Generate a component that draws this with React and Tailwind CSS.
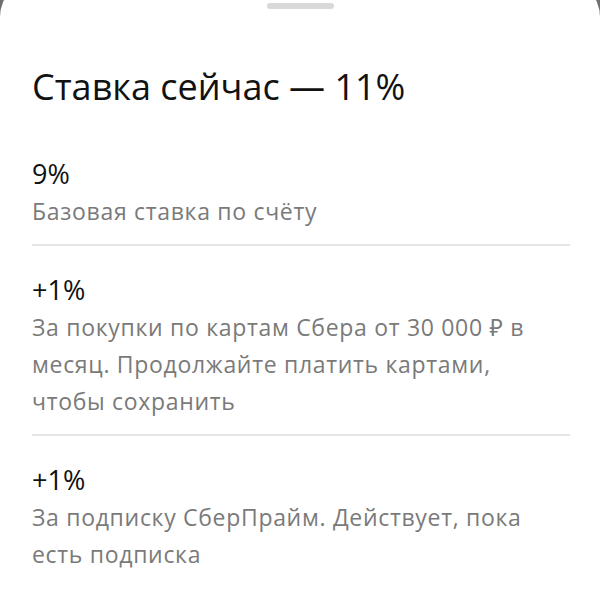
import React from 'react';

const items = [
  { value: '9%', text: 'Базовая ставка по счёту' },
  {
    value: '+1%',
    text: 'За покупки по картам Сбера от 30 000 ₽ в месяц. Продолжайте платить картами, чтобы сохранить',
  },
  { value: '+1%', text: 'За подписку СберПрайм. Действует, пока есть подписка' },
];

const RateItem = ({ value, text, last }) => (
  <div className={`pt-[25px] pb-[14px] ${last ? '' : 'border-b-2 border-[#e6e6e6]'}`}>
    <div className="text-[27px] leading-[38px] text-[#111]">{value}</div>
    <div className="max-w-[510px] text-[23px] leading-[37px] tracking-[0.03em] text-[#7a7a7a]">{text}</div>
  </div>
);

export default function App() {
  return (
    <div className="h-[600px] w-[600px] overflow-hidden bg-[#6f6f6f]" style={{ fontFamily: '"Open Sans", "Noto Sans", sans-serif' }}>
      <div className="mt-[-21px] h-[640px] rounded-t-[38px] bg-white pt-[24px]">
        <div className="mx-auto h-[6px] w-[67px] rounded-full bg-[#d9d9d9]" />
        <div className="px-[32px] pr-[30px]">
          <h1 className="mt-[56px] text-[36px] leading-[44px] text-[#111]">Ставка сейчас — 11%</h1>
          <div className="mt-[21px]">
            {items.map((item, i) => (
              <RateItem key={i} value={item.value} text={item.text} last={i === items.length - 1} />
            ))}
          </div>
        </div>
      </div>
    </div>
  );
}
